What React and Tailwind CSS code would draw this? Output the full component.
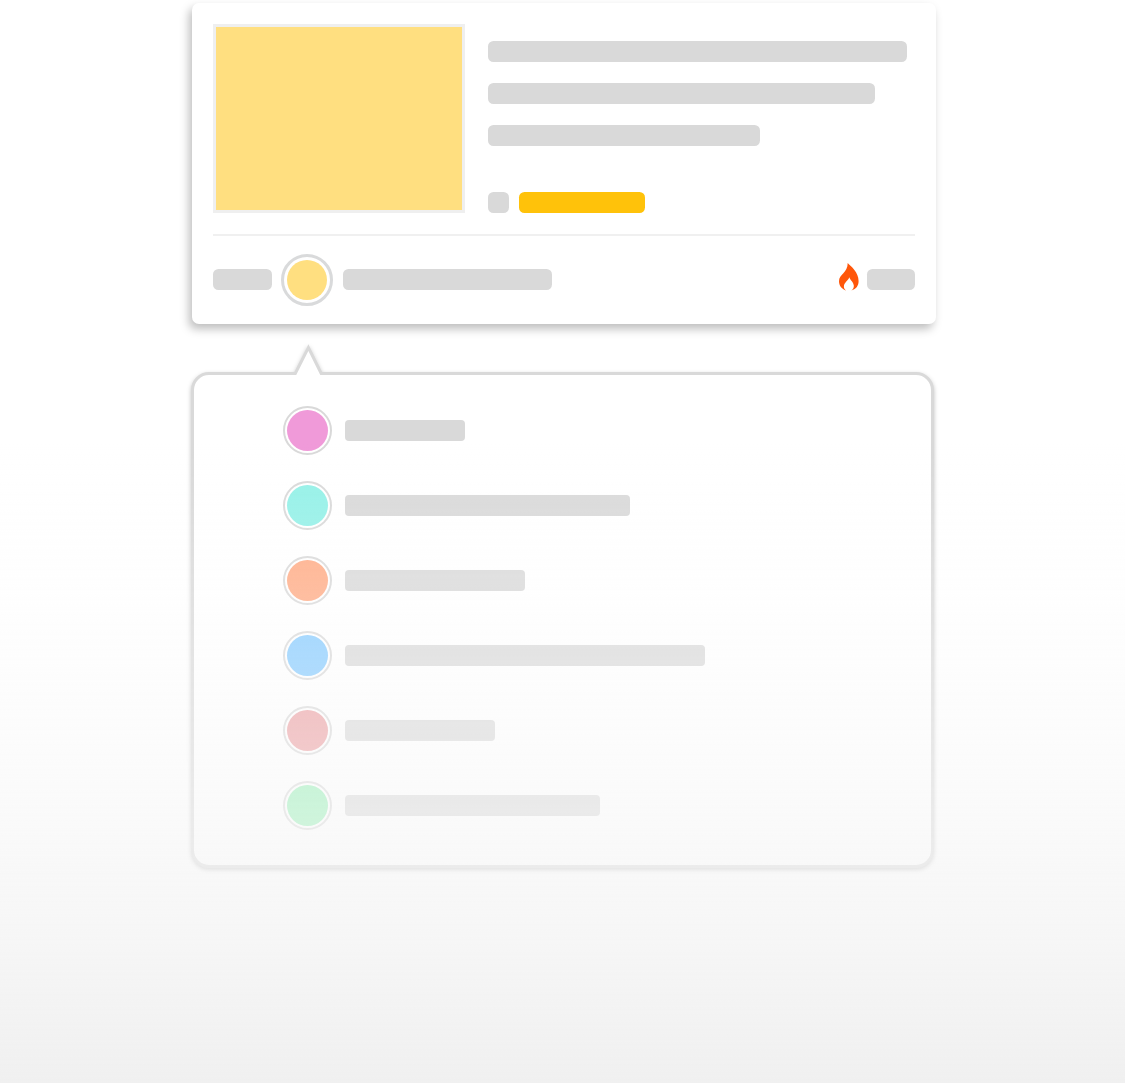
const rows = [
  ["bg-[#f09ad9]", "w-[120px]"],
  ["bg-[#94f1e8]", "w-[285px]"],
  ["bg-[#ffab84]", "w-[180px]"],
  ["bg-[#86cbff]", "w-[360px]"],
  ["bg-[#ec9ea1]", "w-[150px]"],
  ["bg-[#95f0b5]", "w-[255px]"],
];

function Bar({ className }) {
  return <div className={`h-[21px] bg-[#d9d9d9] ${className}`} />;
}

function Flame() {
  return (
    <svg className="mr-2 mb-[6px] h-7 w-5" viewBox="0 0 20 28">
      <path
        fill="#ff560a"
        d="M8.7 0C12 3.5 19.6 9 19.6 18C19.6 22.5 17.4 26 12.4 27.5C14.2 26.2 15 24.8 14.8 22.6C14.5 19 11.5 17.6 10.3 14.2C9.4 17.4 5 19.5 4.9 23.3C4.8 25 5.6 26.5 7.3 27.6C2.5 26.2 0 22.5 0 18.3C0 11 8.8 10 8.7 0Z"
      />
    </svg>
  );
}

function Card() {
  return (
    <section className="ml-48 h-[321px] w-[744px] rounded-[7px] bg-white px-[21px] pt-[21px] shadow-[-3px_5px_10px_rgba(0,0,0,0.26)]">
      <div className="flex h-[189px]">
        <div className="h-[189px] w-[252px] shrink-0 border-3 border-[#efefef] bg-[#ffdf80]" />
        <div className="ml-[22.5px] pt-[17px]">
          <Bar className="w-[419px] rounded-[5.5px]" />
          <Bar className="mt-[21px] w-[387.5px] rounded-[5.5px]" />
          <Bar className="mt-[21px] w-[272.5px] rounded-[5.5px]" />
          <div className="mt-[46px] flex gap-[10.5px]">
            <Bar className="w-[21px] rounded-[5.5px]" />
            <div className="h-[21px] w-[126px] rounded-[5.5px] bg-[#ffc20a]" />
          </div>
        </div>
      </div>
      <div className="mt-[21px] h-[2px] bg-[#f0f0f0]" />
      <div className="mt-[18px] flex h-[52px] items-center">
        <Bar className="-mt-px w-[59px] rounded-[5.5px]" />
        <div className="ml-[9px] size-[52px] rounded-full border-3 border-[#d9dadb] p-[3px]">
          <div className="size-full rounded-full bg-[#ffdf80]" />
        </div>
        <Bar className="-mt-px ml-[10px] w-[209.4px] rounded-[5.5px]" />
        <div className="-mt-px ml-auto flex items-center">
          <Flame />
          <Bar className="w-12 rounded-[5.5px]" />
        </div>
      </div>
    </section>
  );
}

function Popover() {
  return (
    <section className="relative mt-12 ml-[191px] h-[496px] w-[743px] rounded-[18px] border-3 border-[#d9d9d9] bg-white px-[89px] pt-[31px] drop-shadow-[0_2px_2px_rgba(0,0,0,0.25)]">
      <svg className="absolute -top-[31px] left-[98px] h-8 w-8" viewBox="0 0 32 32">
        <path fill="white" d="M2 32L16.4 4L30 32Z" />
        <path fill="none" stroke="#d9d9d9" strokeWidth="3" d="M0 29.5H3.3L16.4 3.5L29.2 29.5H32" />
      </svg>
      <div className="flex flex-col gap-[26px]">
        {rows.map(([color, width]) => (
          <div className="flex h-[49px] items-center gap-[13px]" key={color}>
            <div className="size-[49px] rounded-full border-2 border-[#d9d9d9] p-[2px]">
              <div className={`size-full rounded-full ${color}`} />
            </div>
            <Bar className={`rounded-[4px] ${width}`} />
          </div>
        ))}
      </div>
    </section>
  );
}

export default function App() {
  return (
    <main className="relative h-[1083px] w-[1125px] overflow-hidden bg-white pt-[3px]">
      <Card />
      <Popover />
      <div className="pointer-events-none absolute inset-x-0 bottom-0 h-[640px] bg-[linear-gradient(to_bottom,rgba(255,255,255,0)_0%,rgba(251,251,251,0.25)_25%,rgba(248,248,248,0.5)_50%,rgba(244,244,244,0.75)_75%,#f0f0f0_100%)]" />
    </main>
  );
}
